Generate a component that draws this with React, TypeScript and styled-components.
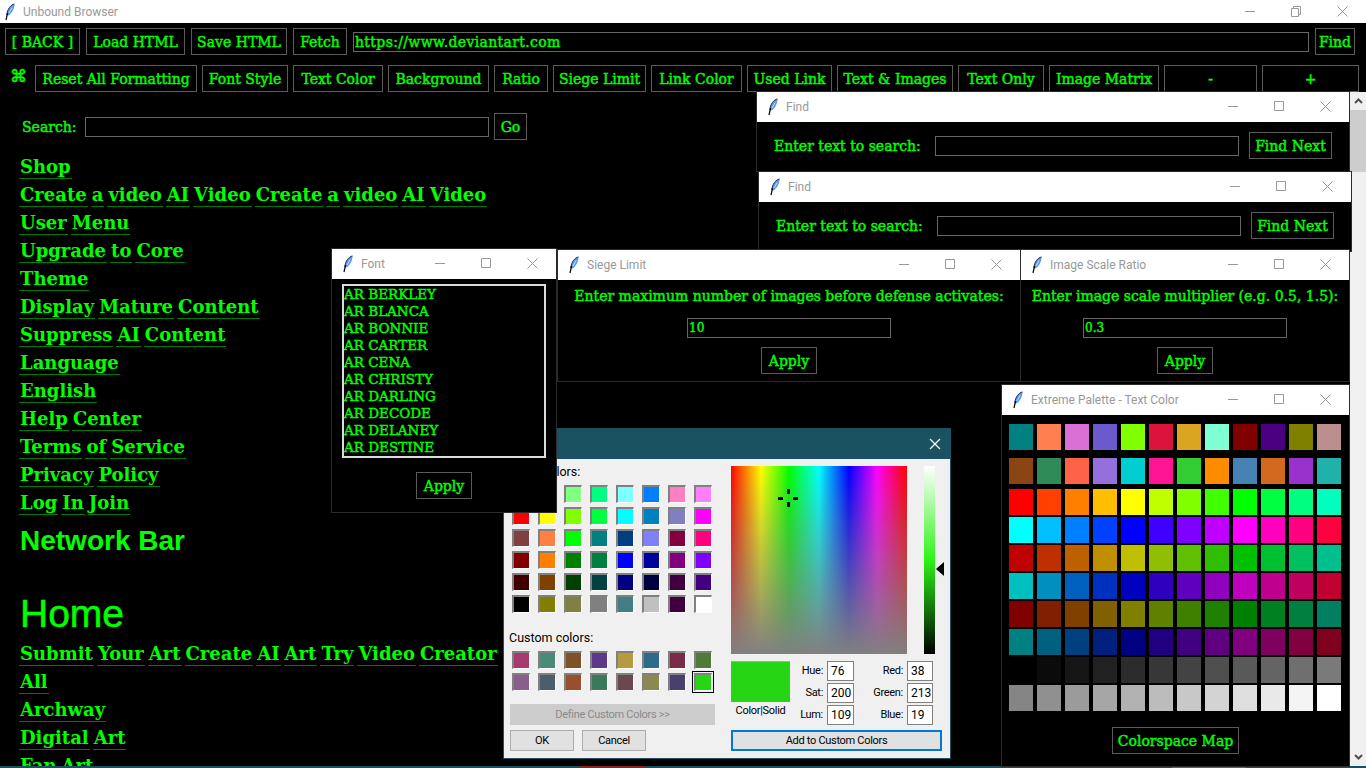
import styled, { createGlobalStyle } from 'styled-components';
import type { ReactNode } from 'react';

const SERIF = '"DejaVu Serif", "Liberation Serif", serif';
const DIALOG_FONT = '"Liberation Sans Narrow", Roboto, "Liberation Sans", sans-serif';
const GREEN = '#00ff00';

const GlobalStyle = createGlobalStyle`
    html, body {
        margin: 0;
        height: 100%;
        overflow: hidden;
        background: #000;
    }
    * {
        box-sizing: border-box;
    }
`;

const Feather = () => (
    <svg width="12" height="18" viewBox="0 0 12 18">
        <path d="M10.5 1 C7 1.5 3.2 6 2.8 12 L4.6 12.5 C8 10 10.6 5.5 10.5 1 Z" fill="#5b97ea" />
        <path d="M10.5 1 C7 1.5 3.2 6 2.8 12" fill="none" stroke="#1b3358" strokeWidth="1" />
        <path d="M8.2 4.5 L5 10" stroke="#c5dcf8" strokeWidth="1" />
        <path d="M3.6 10 L2 17" stroke="#000" strokeWidth="1.2" />
    </svg>
);

const WinControls = ({ restore }: { restore?: boolean }) => (
    <Styled.Controls>
        <Styled.ControlCell>
            <svg width="11" height="11" viewBox="0 0 11 11"><path d="M0 5.5H10" stroke="#999" /></svg>
        </Styled.ControlCell>
        <Styled.ControlCell>
            {restore ? (
                <svg width="11" height="11" viewBox="0 0 11 11" fill="none" stroke="#999">
                    <path d="M0.5 2.5H7.5V10.5H0.5Z" />
                    <path d="M2.5 2.5V0.5H9.5V8.5H7.5" />
                </svg>
            ) : (
                <svg width="11" height="11" viewBox="0 0 11 11" fill="none" stroke="#999"><path d="M0.5 0.5H9.5V9.5H0.5Z" /></svg>
            )}
        </Styled.ControlCell>
        <Styled.ControlCell>
            <svg width="11" height="11" viewBox="0 0 11 11" stroke="#999"><path d="M0.5 0.5L10.5 10.5M10.5 0.5L0.5 10.5" /></svg>
        </Styled.ControlCell>
    </Styled.Controls>
);

type WindowProps = { title: string; left: number; top: number; width: number; height: number; children: ReactNode };

const ToolWindow = ({ title, left, top, width, height, children }: WindowProps) => (
    <Styled.Window $left={left} $top={top} $width={width} $height={height}>
        <Styled.TitleBar>
            <Feather />
            <Styled.TitleText>{title}</Styled.TitleText>
            <WinControls />
        </Styled.TitleBar>
        {children}
    </Styled.Window>
);

const FindWindow = ({ left, top }: { left: number; top: number }) => (
    <ToolWindow title="Find" left={left} top={top} width={594} height={81}>
        <Styled.FindBody>
            <Styled.FindLabel>Enter text to search:</Styled.FindLabel>
            <Styled.Field $height={20} />
            <Styled.Button $w={83}>Find Next</Styled.Button>
        </Styled.FindBody>
    </ToolWindow>
);

const PromptWindow = (props: { title: string; prompt: string; value: string; left: number; width: number }) => (
    <ToolWindow title={props.title} left={props.left} top={249} width={props.width} height={133}>
        <Styled.PromptBody>
            <Styled.PromptText>{props.prompt}</Styled.PromptText>
            <Styled.PromptField readOnly value={props.value} />
            <Styled.Button $w={56}>Apply</Styled.Button>
        </Styled.PromptBody>
    </ToolWindow>
);

const TOP_ROW = [
    { label: '[ BACK ]', w: 75 },
    { label: 'Load HTML', w: 99 },
    { label: 'Save HTML', w: 96 },
    { label: 'Fetch', w: 54 },
];

const FORMAT_ROW = [
    { label: 'Reset All Formatting', w: 162 },
    { label: 'Font Style', w: 86 },
    { label: 'Text Color', w: 90 },
    { label: 'Background', w: 101 },
    { label: 'Ratio', w: 54 },
    { label: 'Siege Limit', w: 93 },
    { label: 'Link Color', w: 91 },
    { label: 'Used Link', w: 85 },
    { label: 'Text & Images', w: 116 },
    { label: 'Text Only', w: 86 },
    { label: 'Image Matrix', w: 110 },
    { label: '-', w: 93 },
    { label: '+', w: 97 },
];

const FIRST_LINKS = [
    'Shop',
    'Create a video AI Video Create a video AI Video',
    'User Menu',
    'Upgrade to Core',
    'Theme',
    'Display Mature Content',
    'Suppress AI Content',
    'Language',
    'English',
    'Help Center',
    'Terms of Service',
    'Privacy Policy',
    'Log In Join',
];

const SECOND_LINKS = ['Submit Your Art Create AI Art Try Video Creator', 'All', 'Archway', 'Digital Art', 'Fan Art'];

const FONTS = ['AR BERKLEY', 'AR BLANCA', 'AR BONNIE', 'AR CARTER', 'AR CENA', 'AR CHRISTY', 'AR DARLING', 'AR DECODE', 'AR DELANEY', 'AR DESTINE'];

const BASIC_COLORS = [
    '#ff8080', '#ffff80', '#80ff80', '#00ff80', '#80ffff', '#0080ff', '#ff80c0', '#ff80ff',
    '#ff0000', '#ffff00', '#80ff00', '#00ff40', '#00ffff', '#0080c0', '#8080c0', '#ff00ff',
    '#804040', '#ff8040', '#00ff00', '#008080', '#004080', '#8080ff', '#800040', '#ff0080',
    '#800000', '#ff8000', '#008000', '#008040', '#0000ff', '#0000a0', '#800080', '#8000ff',
    '#400000', '#804000', '#004000', '#004040', '#000080', '#000040', '#400040', '#400080',
    '#000000', '#808000', '#808040', '#808080', '#408080', '#c0c0c0', '#400040', '#ffffff',
];

const CUSTOM_COLORS = [
    '#a63a6f', '#4a8a78', '#7d5225', '#5c3a8a', '#b89a3e', '#2e6a8c', '#7a2a48', '#4f7a3a',
    '#8a5e8a', '#4a5e6e', '#96502e', '#3a7a5a', '#6a4850', '#8a8a50', '#4a4070', '#26d513',
];

const NAMED_COLORS = [
    '#008080', '#ff7f50', '#da70d6', '#6a5acd', '#7fff00', '#dc143c', '#daa520', '#7fffd4', '#800000', '#4b0082', '#808000', '#bc8f8f',
    '#8b4513', '#2e8b57', '#ff6347', '#9370db', '#00ced1', '#ff1493', '#32cd32', '#ff8c00', '#4682b4', '#d2691e', '#9932cc', '#20b2aa',
];

// hue wheel in 15 degree steps, at three brightness levels
const hsv = (h: number, v: number) => {
    const f = (n: number) => {
        const k = (n + h / 60) % 6;
        return Math.round(255 * v * (1 - Math.max(0, Math.min(k, 4 - k, 1))));
    };
    return `rgb(${f(5)},${f(3)},${f(1)})`;
};
const WHEEL_COLORS = [1, 0.75, 0.5].flatMap((v) => Array.from({ length: 24 }, (_, i) => hsv(i * 15, v)));
const GRAY_COLORS = Array.from({ length: 24 }, (_, i) => {
    const g = Math.round((i * 255) / 23);
    return `rgb(${g},${g},${g})`;
});

const HSL_FIELDS = [
    ['Hue:', '76', 'Red:', '38'],
    ['Sat:', '200', 'Green:', '213'],
    ['Lum:', '109', 'Blue:', '19'],
];

const LinkLine = ({ text }: { text: string }) => (
    <Styled.LinkLine>
        {text.split(' ').map((word, i) => (
            <Styled.Word key={i}>{word}</Styled.Word>
        ))}
    </Styled.LinkLine>
);

const ColorDialog = () => (
    <Styled.Dialog>
        <Styled.DialogTitle>
            <svg width="12" height="12" viewBox="0 0 12 12" stroke="#fff" strokeWidth="1.2">
                <path d="M1 1L11 11M11 1L1 11" />
            </svg>
        </Styled.DialogTitle>
        <Styled.DialogBody>
            <Styled.DialogLeft>
                <Styled.DialogLabel>Basic colors:</Styled.DialogLabel>
                <Styled.SwatchGrid>
                    {BASIC_COLORS.map((c, i) => (
                        <Styled.Swatch key={i} style={{ backgroundColor: c }} />
                    ))}
                </Styled.SwatchGrid>
                <Styled.CustomLabel>Custom colors:</Styled.CustomLabel>
                <Styled.SwatchGrid>
                    {CUSTOM_COLORS.map((c, i) => (
                        <Styled.Swatch key={i} $selected={i === 15} style={{ backgroundColor: c }} />
                    ))}
                </Styled.SwatchGrid>
                <Styled.DefineButton disabled>Define Custom Colors &gt;&gt;</Styled.DefineButton>
                <Styled.DialogActions>
                    <Styled.DialogButton>OK</Styled.DialogButton>
                    <Styled.DialogButton>Cancel</Styled.DialogButton>
                </Styled.DialogActions>
            </Styled.DialogLeft>
            <Styled.DialogRight>
                <Styled.PickerRow>
                    <Styled.Spectrum>
                        <Styled.Crosshair>
                            <svg width="20" height="20" viewBox="0 0 20 20" fill="#000">
                                <rect x="9" y="1" width="3" height="5" />
                                <rect x="9" y="14" width="3" height="5" />
                                <rect x="0" y="9" width="5" height="3" />
                                <rect x="15" y="9" width="5" height="3" />
                            </svg>
                        </Styled.Crosshair>
                    </Styled.Spectrum>
                    <Styled.LumBar />
                    <Styled.LumArrow>
                        <svg width="8" height="14" viewBox="0 0 8 14"><path d="M8 0V14L0 7Z" fill="#000" /></svg>
                    </Styled.LumArrow>
                </Styled.PickerRow>
                <Styled.ValueRow>
                    <Styled.PreviewColumn>
                        <Styled.Preview />
                        <Styled.PreviewLabel>Color|Solid</Styled.PreviewLabel>
                    </Styled.PreviewColumn>
                    <Styled.ValueGrid>
                        {HSL_FIELDS.flat().map((item, i) =>
                            i % 2 === 0 ? (
                                <Styled.ValueLabel key={i}>{item}</Styled.ValueLabel>
                            ) : (
                                <Styled.ValueBox key={i}>{item}</Styled.ValueBox>
                            ),
                        )}
                    </Styled.ValueGrid>
                </Styled.ValueRow>
                <Styled.AddButton>Add to Custom Colors</Styled.AddButton>
            </Styled.DialogRight>
        </Styled.DialogBody>
    </Styled.Dialog>
);

export default function App() {
    return (
        <>
            <GlobalStyle />
            <Styled.Screen>
                <Styled.MainWindow>
                    <Styled.MainTitle>
                        <Feather />
                        <Styled.TitleText>Unbound Browser</Styled.TitleText>
                        <WinControls restore />
                    </Styled.MainTitle>

                    <Styled.AddressRow>
                        {TOP_ROW.map((b) => (
                            <Styled.Button key={b.label} $w={b.w}>{b.label}</Styled.Button>
                        ))}
                        <Styled.AddressField readOnly value="https://www.deviantart.com" />
                        <Styled.Button $w={40}>Find</Styled.Button>
                    </Styled.AddressRow>

                    <Styled.FormatRow>
                        <Styled.Command>⌘</Styled.Command>
                        {FORMAT_ROW.map((b) => (
                            <Styled.Button key={b.label} $w={b.w}>{b.label}</Styled.Button>
                        ))}
                    </Styled.FormatRow>

                    <Styled.Viewport>
                        <Styled.Page>
                            <Styled.SearchRow>
                                <Styled.SearchLabel>Search:</Styled.SearchLabel>
                                <Styled.Field $height={20} $width={404} />
                                <Styled.Button $w={33}>Go</Styled.Button>
                            </Styled.SearchRow>
                            {FIRST_LINKS.map((text) => (
                                <LinkLine key={text} text={text} />
                            ))}
                            <Styled.NetworkHeading>Network Bar</Styled.NetworkHeading>
                            <Styled.HomeHeading>Home</Styled.HomeHeading>
                            {SECOND_LINKS.map((text) => (
                                <LinkLine key={text} text={text} />
                            ))}
                        </Styled.Page>
                        <Styled.Scrollbar>
                            <Styled.ScrollButton>
                                <svg width="9" height="6" viewBox="0 0 9 6" fill="none" stroke="#505050" strokeWidth="2">
                                    <path d="M1 5L4.5 1.5L8 5" />
                                </svg>
                            </Styled.ScrollButton>
                            <Styled.ScrollThumb />
                            <Styled.ScrollSpacer />
                            <Styled.ScrollButton>
                                <svg width="9" height="6" viewBox="0 0 9 6" fill="none" stroke="#505050" strokeWidth="2">
                                    <path d="M1 1L4.5 4.5L8 1" />
                                </svg>
                            </Styled.ScrollButton>
                        </Styled.Scrollbar>
                    </Styled.Viewport>
                </Styled.MainWindow>

                <Styled.DesktopStrip>
                    <Styled.StripPart $w={579} $color="#17505f" />
                    <Styled.StripPart $w={66} $color="#8b2020" />
                    <Styled.StripPart $w={527} $color="#17505f" />
                    <Styled.StripPart $w={74} $color="#25708a" />
                    <Styled.StripPart $w={120} $color="#17505f" />
                </Styled.DesktopStrip>

                <ColorDialog />
                <FindWindow left={756} top={91} />
                <FindWindow left={758} top={171} />

                <ToolWindow title="Font" left={331} top={248} width={226} height={265}>
                    <Styled.FontBody>
                        <Styled.FontList>
                            {FONTS.map((f) => (
                                <Styled.FontItem key={f}>{f}</Styled.FontItem>
                            ))}
                        </Styled.FontList>
                        <Styled.Button $w={56}>Apply</Styled.Button>
                    </Styled.FontBody>
                </ToolWindow>

                <PromptWindow
                    title="Siege Limit"
                    prompt="Enter maximum number of images before defense activates:"
                    value="10"
                    left={557}
                    width={464}
                />
                <PromptWindow
                    title="Image Scale Ratio"
                    prompt="Enter image scale multiplier (e.g. 0.5, 1.5):"
                    value="0.3"
                    left={1020}
                    width={330}
                />

                <ToolWindow title="Extreme Palette - Text Color" left={1001} top={384} width={349} height={383}>
                    <Styled.PaletteBody>
                        <Styled.NamedGrid>
                            {NAMED_COLORS.map((c, i) => (
                                <Styled.PaletteSwatch key={i} style={{ backgroundColor: c }} />
                            ))}
                        </Styled.NamedGrid>
                        <Styled.WheelGrid>
                            {[...WHEEL_COLORS, ...GRAY_COLORS].map((c, i) => (
                                <Styled.PaletteSwatch key={i} style={{ backgroundColor: c }} />
                            ))}
                        </Styled.WheelGrid>
                        <Styled.MapButton $w={127}>Colorspace Map</Styled.MapButton>
                    </Styled.PaletteBody>
                </ToolWindow>
            </Styled.Screen>
        </>
    );
}

const Styled = {
    Screen: styled.div`
        position: relative;
        width: 1366px;
        height: 768px;
        overflow: hidden;
        background: #000;
        color: ${GREEN};
        font-family: ${SERIF};
        font-size: 14px;
        -webkit-text-stroke: 0.45px ${GREEN};
    `,
    MainWindow: styled.div`
        display: flex;
        flex-direction: column;
        height: 766px;
    `,
    MainTitle: styled.div`
        display: flex;
        align-items: center;
        flex: none;
        height: 23px;
        padding-left: 4px;
        background: #fff;
    `,
    Controls: styled.div`
        display: flex;
        margin-left: auto;
        margin-right: 1px;
    `,
    ControlCell: styled.div`
        display: flex;
        align-items: center;
        justify-content: center;
        width: 46px;
        height: 20px;
    `,
    TitleBar: styled.div`
        display: flex;
        align-items: center;
        flex: none;
        height: 30px;
        padding: 0 0 1px 10px;
        background: #fff;
    `,
    TitleText: styled.span`
        margin-left: 7px;
        color: #999;
        font-family: Roboto, sans-serif;
        font-size: 12px;
        white-space: nowrap;
        -webkit-text-stroke: 0;
    `,
    Button: styled.div<{ $w: number }>`
        display: flex;
        align-items: center;
        justify-content: center;
        flex: none;
        width: ${(p) => p.$w}px;
        height: 27px;
        border: 1px solid #5a5a5a;
        background: #000;
        color: ${GREEN};
        white-space: nowrap;
    `,
    Field: styled.div<{ $height: number; $width?: number }>`
        flex: ${(p) => (p.$width ? 'none' : '1')};
        width: ${(p) => (p.$width ? `${p.$width}px` : 'auto')};
        height: ${(p) => p.$height}px;
        border: 1px solid #666;
        background: #000;
    `,
    AddressRow: styled.div`
        display: flex;
        align-items: center;
        gap: 6px;
        flex: none;
        height: 27px;
        margin-top: 5px;
        padding: 0 11px 0 5px;
    `,
    AddressField: styled.input`
        flex: 1;
        min-width: 0;
        height: 20px;
        padding: 0 1px;
        border: 1px solid #666;
        outline: none;
        background: #000;
        color: ${GREEN};
        font-family: ${SERIF};
        font-size: 14px;
        letter-spacing: 0.35px;
        -webkit-text-stroke: 0.45px ${GREEN};
    `,
    FormatRow: styled.div`
        display: flex;
        align-items: center;
        gap: 5px;
        flex: none;
        height: 27px;
        margin-top: 10px;
        padding-left: 10px;
    `,
    Command: styled.span`
        flex: none;
        width: 20px;
        margin-top: -6px;
        font-family: 'DejaVu Sans', sans-serif;
        font-size: 17px;
        line-height: 18px;
    `,
    Viewport: styled.div`
        display: flex;
        flex: 1;
        min-height: 0;
    `,
    Page: styled.div`
        flex: 1;
        min-width: 0;
        overflow: hidden;
        padding-top: 21px;
    `,
    SearchRow: styled.div`
        display: flex;
        align-items: center;
        gap: 5px;
        margin-bottom: 13px;
        padding-left: 22px;
    `,
    SearchLabel: styled.span`
        width: 58px;
    `,
    LinkLine: styled.div`
        display: flex;
        gap: 3px;
        height: 28px;
        padding-left: 19px;
    `,
    Word: styled.span`
        height: 26px;
        padding: 0 1px;
        border-bottom: 1px solid #007a00;
        font-size: 18px;
        font-weight: 700;
        line-height: 28px;
        -webkit-text-stroke: 0;
    `,
    NetworkHeading: styled.div`
        height: 32px;
        margin-top: 8px;
        padding-left: 20px;
        font-family: 'Liberation Sans', Arial, sans-serif;
        font-size: 28px;
        font-weight: 700;
        line-height: 32px;
        -webkit-text-stroke: 0;
    `,
    HomeHeading: styled.div`
        height: 44px;
        margin-top: 35px;
        margin-bottom: 4px;
        padding-left: 20px;
        font-family: 'Liberation Sans', Arial, sans-serif;
        font-size: 39px;
        line-height: 44px;
        -webkit-text-stroke: 0.5px ${GREEN};
    `,
    Scrollbar: styled.div`
        display: flex;
        flex-direction: column;
        flex: none;
        width: 16px;
        background: #f0f0f0;
    `,
    ScrollButton: styled.div`
        display: flex;
        align-items: center;
        justify-content: center;
        flex: none;
        height: 18px;
    `,
    ScrollThumb: styled.div`
        flex: none;
        height: 62px;
        background: #cdcdcd;
    `,
    ScrollSpacer: styled.div`
        flex: 1;
    `,
    DesktopStrip: styled.div`
        display: flex;
        height: 2px;
    `,
    StripPart: styled.div<{ $w: number; $color: string }>`
        flex: none;
        width: ${(p) => p.$w}px;
        background: ${(p) => p.$color};
    `,
    Window: styled.div<{ $left: number; $top: number; $width: number; $height: number }>`
        position: absolute;
        left: ${(p) => p.$left}px;
        top: ${(p) => p.$top}px;
        display: flex;
        flex-direction: column;
        width: ${(p) => p.$width}px;
        height: ${(p) => p.$height}px;
        border: 1px solid #2b2b2b;
        background: #000;
    `,
    FindBody: styled.div`
        display: flex;
        align-items: center;
        gap: 10px;
        padding: 10px 17px 0 17px;
    `,
    FindLabel: styled.span`
        flex: none;
        width: 151px;
        white-space: nowrap;
    `,
    PromptBody: styled.div`
        display: flex;
        flex-direction: column;
        align-items: center;
        padding-top: 6px;
    `,
    PromptText: styled.div`
        height: 20px;
        line-height: 20px;
        white-space: nowrap;
    `,
    PromptField: styled.input`
        width: 204px;
        height: 20px;
        margin: 12px 0 9px;
        padding: 0 1px;
        border: 1px solid #666;
        outline: none;
        background: #000;
        color: ${GREEN};
        font-family: ${SERIF};
        font-size: 12px;
        -webkit-text-stroke: 0.45px ${GREEN};
    `,
    FontBody: styled.div`
        display: flex;
        flex-direction: column;
        align-items: center;
        padding-top: 5px;
    `,
    FontList: styled.div`
        width: 204px;
        height: 174px;
        margin-bottom: 14px;
        border: 2px solid #dcdcdc;
    `,
    FontItem: styled.div`
        height: 17px;
        font-size: 13.5px;
        line-height: 17px;
        white-space: nowrap;
    `,
    PaletteBody: styled.div`
        display: flex;
        flex-direction: column;
        padding: 9px 7px 0 7px;
    `,
    NamedGrid: styled.div`
        display: grid;
        grid-template-columns: repeat(12, 24px);
        column-gap: 4px;
        row-gap: 8px;
        margin-bottom: 5px;
    `,
    WheelGrid: styled.div`
        display: grid;
        grid-template-columns: repeat(12, 24px);
        column-gap: 4px;
        row-gap: 2px;
        margin-bottom: 16px;
    `,
    PaletteSwatch: styled.div`
        height: 26px;
    `,
    MapButton: styled.div<{ $w: number }>`
        display: flex;
        align-items: center;
        justify-content: center;
        align-self: center;
        width: ${(p) => p.$w}px;
        height: 27px;
        border: 1px solid #5a5a5a;
    `,
    Dialog: styled.div`
        position: absolute;
        left: 503px;
        top: 428px;
        display: flex;
        flex-direction: column;
        width: 448px;
        height: 331px;
        border: 1px solid #1a5261;
        background: #f0f0f0;
        color: #000;
        font-family: ${DIALOG_FONT};
        font-size: 12.5px;
        -webkit-text-stroke: 0;
    `,
    DialogTitle: styled.div`
        display: flex;
        align-items: center;
        justify-content: flex-end;
        flex: none;
        height: 30px;
        padding-right: 9px;
        background: #1a5261;
    `,
    DialogBody: styled.div`
        display: flex;
        flex: 1;
    `,
    DialogLeft: styled.div`
        flex: none;
        width: 227px;
        padding: 6px 0 0 5px;
    `,
    DialogLabel: styled.div`
        height: 14px;
        margin-bottom: 6px;
        line-height: 14px;
    `,
    CustomLabel: styled.div`
        height: 14px;
        margin: 18px 0 6px;
        line-height: 14px;
    `,
    SwatchGrid: styled.div`
        display: grid;
        grid-template-columns: repeat(8, 18px);
        gap: 4px 8px;
        padding-left: 3px;
    `,
    Swatch: styled.div<{ $selected?: boolean }>`
        height: 18px;
        border-width: 2px 1px 1px 2px;
        border-style: solid;
        border-color: #808080 #fff #fff #808080;
        outline: ${(p) => (p.$selected ? '1px solid #000' : 'none')};
        outline-offset: 1px;
    `,
    DefineButton: styled.button`
        display: block;
        width: 205px;
        height: 21px;
        margin: 13px 0 5px 1px;
        padding: 0;
        border: 1px solid #ccc;
        background: #ccc;
        color: #8a8a8a;
        font-size: 11px;
        font-family: inherit;
        letter-spacing: -0.3px;
    `,
    DialogActions: styled.div`
        display: flex;
        gap: 8px;
        margin-left: 1px;
    `,
    DialogButton: styled.button`
        width: 64px;
        height: 21px;
        padding: 0;
        border: 1px solid #adadad;
        background: #e1e1e1;
        color: #000;
        font-size: 11px;
        font-family: inherit;
        letter-spacing: -0.3px;
    `,
    DialogRight: styled.div`
        display: flex;
        flex-direction: column;
        flex: 1;
        padding-top: 7px;
    `,
    PickerRow: styled.div`
        position: relative;
        display: flex;
        gap: 17px;
        height: 188px;
    `,
    Spectrum: styled.div`
        position: relative;
        width: 176px;
        height: 188px;
        background:
            linear-gradient(to bottom, rgba(128, 128, 128, 0), #808080),
            linear-gradient(to right, #f00 0%, #ff0 17%, #0f0 33%, #0ff 50%, #00f 67%, #f0f 83%, #f00 100%);
    `,
    Crosshair: styled.div`
        position: absolute;
        left: 47px;
        top: 22px;
        display: flex;
    `,
    LumBar: styled.div`
        width: 11px;
        height: 188px;
        background: linear-gradient(to bottom, #fff 0%, #2cf416 50%, #000 100%);
    `,
    LumArrow: styled.div`
        position: absolute;
        left: 205px;
        top: 96px;
        display: flex;
    `,
    ValueRow: styled.div`
        display: flex;
        margin-top: 7px;
    `,
    PreviewColumn: styled.div`
        flex: none;
        width: 59px;
        text-align: center;
    `,
    Preview: styled.div`
        height: 41px;
        background: #26d513;
        border-top: 1px solid #aaa;
    `,
    PreviewLabel: styled.div`
        margin-top: 2px;
        font-size: 11px;
        line-height: 14px;
        letter-spacing: -0.3px;
    `,
    ValueGrid: styled.div`
        display: grid;
        grid-template-columns: 33px 27px 45px 26px;
        grid-auto-rows: 20px;
        gap: 2px 4px;
    `,
    ValueLabel: styled.div`
        font-size: 11px;
        line-height: 20px;
        letter-spacing: -0.3px;
        text-align: right;
    `,
    ValueBox: styled.div`
        padding-left: 3px;
        border: 1px solid #808080;
        background: #fff;
        font-size: 12px;
        line-height: 18px;
    `,
    AddButton: styled.button`
        width: 211px;
        height: 21px;
        margin-top: 5px;
        padding: 0;
        border: 2px solid #0078d7;
        background: #e1e1e1;
        color: #000;
        font-size: 11px;
        font-family: inherit;
        letter-spacing: -0.3px;
    `,
};
